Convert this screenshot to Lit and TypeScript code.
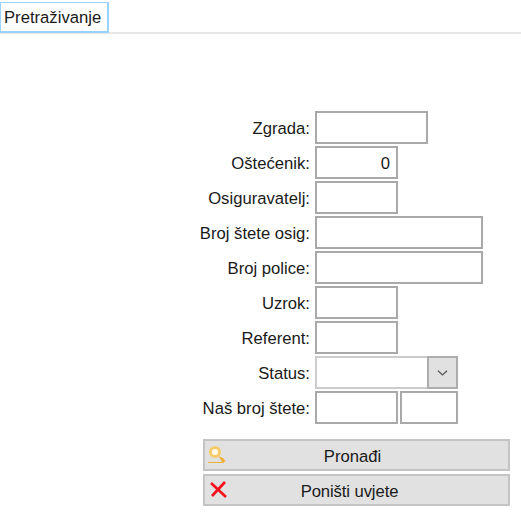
import { LitElement, html, css } from 'lit';
import { customElement } from 'lit/decorators.js';

type Row = { label: string; widths: number[]; value?: string; select?: boolean };

const ROWS: Row[] = [
  { label: 'Zgrada:', widths: [113] },
  { label: 'Oštećenik:', widths: [83], value: '0' },
  { label: 'Osiguravatelj:', widths: [83] },
  { label: 'Broj štete osig:', widths: [168] },
  { label: 'Broj police:', widths: [168] },
  { label: 'Uzrok:', widths: [83] },
  { label: 'Referent:', widths: [83] },
  { label: 'Status:', widths: [143], select: true },
  { label: 'Naš broj štete:', widths: [83, 58] },
];

@customElement('app-root')
export class AppRoot extends LitElement {
  static styles = css`
    :host {
      display: block;
      width: 521px;
      height: 521px;
      background: #fff;
      color: #1a1a1a;
      font-family: 'Liberation Sans', Arial, sans-serif;
      font-size: 16.67px;
      overflow: hidden;
    }
    .tabs {
      display: flex;
      padding-top: 2px;
      border-bottom: 2px solid #e6e6e6;
      height: 30px;
    }
    .tab {
      box-sizing: border-box;
      width: 109px;
      height: 31px;
      border: 1px solid #99d1ff;
      border-width: 1px 2px 2px 1px;
      padding-left: 3px;
      line-height: 29px;
    }
    .form {
      display: grid;
      grid-template-columns: 310px auto;
      column-gap: 5px;
      row-gap: 2px;
      justify-content: start;
      padding-top: 77px;
    }
    .label {
      text-align: right;
      line-height: 35px;
      height: 33px;
    }
    .fields {
      display: flex;
      gap: 2px;
    }
    .input {
      box-sizing: border-box;
      height: 33px;
      border: 2px solid #a9a9a9;
      background: #fff;
      text-align: right;
      line-height: 31px;
      padding-right: 6px;
    }
    .select {
      box-sizing: border-box;
      height: 33px;
      display: flex;
      justify-content: flex-end;
      border: 1px solid #ccc;
      border-width: 2px 0 2px 2px;
      background: #fff;
    }
    .arrow {
      box-sizing: border-box;
      width: 31px;
      margin-top: -2px;
      height: 33px;
      display: flex;
      align-items: center;
      justify-content: center;
      background: #e1e1e1;
      border: 2px solid #adadad;
    }
    .buttons {
      display: flex;
      flex-direction: column;
      gap: 3px;
      width: 307px;
      margin: 15px 0 0 203px;
    }
    .button {
      box-sizing: border-box;
      position: relative;
      height: 32px;
      background: #e1e1e1;
      border: 2px solid #c4c4c4;
      text-align: center;
      line-height: 31px;
    }
    .find {
      padding-right: 8px;
    }
    .reset {
      padding-right: 14px;
      letter-spacing: -0.1px;
    }
    .button svg {
      position: absolute;
      left: 3px;
      top: 4px;
    }
  `;

  private renderField(row: Row) {
    if (row.select) {
      return html`<div class="select" style="width:${row.widths[0]}px">
        <div class="arrow">
          <svg width="11" height="6" viewBox="0 0 11 6">
            <path d="M1 .7 5.5 5 10 .7" fill="none" stroke="#555" stroke-width="1.2" />
          </svg>
        </div>
      </div>`;
    }
    return row.widths.map(
      (w) => html`<div class="input" style="width:${w}px">${row.value ?? ''}</div>`
    );
  }

  render() {
    return html`
      <div class="tabs"><div class="tab">Pretraživanje</div></div>
      <div class="form">
        ${ROWS.map(
          (row) => html`
            <div class="label">${row.label}</div>
            <div class="fields">${this.renderField(row)}</div>
          `
        )}
      </div>
      <div class="buttons">
        <div class="button find">
          <svg width="20" height="20" viewBox="0 0 20 20">
            <circle cx="7" cy="7" r="4.6" fill="#fff8e8" stroke="#f6cb6a" stroke-width="3" />
            <path d="M10.5 11 15.5 13.5 17.5 16 15 18H0V17H14Z" fill="#ecb138" />
          </svg>
          Pronađi
        </div>
        <div class="button reset">
          <svg width="20" height="20" viewBox="0 0 20 20">
            <path d="M3 3 18 17" fill="none" stroke="#f5101c" stroke-width="2.6" />
            <path d="M17 2 4 16" fill="none" stroke="#f5101c" stroke-width="2.6" />
          </svg>
          Poništi uvjete
        </div>
      </div>
    `;
  }
}
